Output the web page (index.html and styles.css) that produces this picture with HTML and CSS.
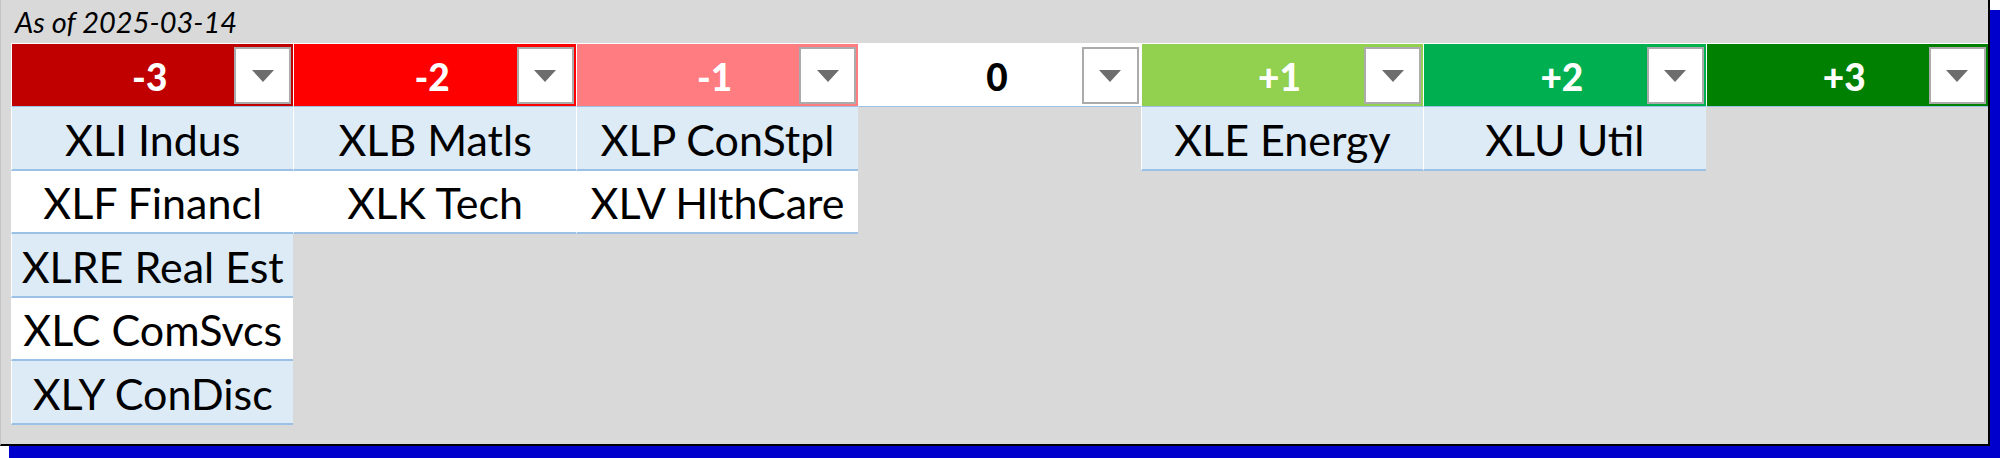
FILE: index.html
```html
<!DOCTYPE html>
<html lang="en">
<head>
<meta charset="utf-8">
<title>Sector ratings</title>
<link rel="stylesheet" href="styles.css">
</head>
<body>
<div class="panel">
  <div class="title">As of 2025-03-14</div>
  <div class="board">
    <div class="col">
      <div class="head h-m3"><span class="num">-3</span><span class="dd"><svg viewBox="0 0 22 12" width="22" height="12"><path d="M0 0H22L11 12Z"/></svg></span></div>
      <div class="cell alt">XLI Indus</div>
      <div class="cell">XLF Financl</div>
      <div class="cell alt">XLRE Real Est</div>
      <div class="cell">XLC ComSvcs</div>
      <div class="cell alt">XLY ConDisc</div>
    </div>
    <div class="col">
      <div class="head h-m2"><span class="num">-2</span><span class="dd"><svg viewBox="0 0 22 12" width="22" height="12"><path d="M0 0H22L11 12Z"/></svg></span></div>
      <div class="cell alt">XLB Matls</div>
      <div class="cell">XLK Tech</div>
    </div>
    <div class="col">
      <div class="head h-m1"><span class="num">-1</span><span class="dd"><svg viewBox="0 0 22 12" width="22" height="12"><path d="M0 0H22L11 12Z"/></svg></span></div>
      <div class="cell alt">XLP ConStpl</div>
      <div class="cell">XLV HlthCare</div>
    </div>
    <div class="col">
      <div class="head h-0"><span class="num">0</span><span class="dd"><svg viewBox="0 0 22 12" width="22" height="12"><path d="M0 0H22L11 12Z"/></svg></span></div>
    </div>
    <div class="col">
      <div class="head h-p1"><span class="num">+1</span><span class="dd"><svg viewBox="0 0 22 12" width="22" height="12"><path d="M0 0H22L11 12Z"/></svg></span></div>
      <div class="cell alt">XLE Energy</div>
    </div>
    <div class="col">
      <div class="head h-p2"><span class="num">+2</span><span class="dd"><svg viewBox="0 0 22 12" width="22" height="12"><path d="M0 0H22L11 12Z"/></svg></span></div>
      <div class="cell alt">XLU Util</div>
    </div>
    <div class="col">
      <div class="head h-p3"><span class="num">+3</span><span class="dd"><svg viewBox="0 0 22 12" width="22" height="12"><path d="M0 0H22L11 12Z"/></svg></span></div>
    </div>
  </div>
</div>
</body>
</html>
```
FILE: styles.css
```css
html, body {
  margin: 0;
  padding: 0;
  background: #ffffff;
}
body {
  width: 2000px;
  height: 458px;
  overflow: hidden;
  font-family: Lato, "Liberation Sans", sans-serif;
}
.panel {
  width: 1987px;
  height: 444px;
  background: #d9d9d9;
  border-left: 1px solid #c4c4c4;
  border-right: 2px solid #000000;
  border-bottom: 2px solid #000000;
  box-shadow: 10px 11px 0 1px #0000cc;
  display: flex;
  flex-direction: column;
}
.title {
  height: 43px;
  box-sizing: border-box;
  padding-left: 14px;
  font-style: italic;
  font-size: 29px;
  line-height: 44px;
  color: #000;
}
.board {
  margin-left: 10px;
  display: grid;
  grid-template-columns: repeat(7, 1fr);
  align-items: start;
}
.col {
  display: flex;
  flex-direction: column;
}
.head {
  position: relative;
  height: 62px;
  border-top: 1px solid #ffffff;
  border-left: 1px solid #ffffff;
  border-bottom: 1px solid #9bc2e6;
  display: flex;
  align-items: center;
  justify-content: center;
  font-weight: 900;
  font-size: 37px;
  color: #ffffff;
}
.num {
  position: relative;
  top: 1px;
  left: -3px;
}
.h-m3 { background: #c00000; }
.h-m2 { background: #ff0000; }
.h-m1 { background: #ff7c80; }
.h-0 { background: #ffffff; color: #000000; }
.h-p1 { background: #92d050; }
.h-p2 { background: #00b050; }
.h-p3 { background: #008000; }
.dd {
  position: absolute;
  right: 2px;
  top: 3px;
  width: 57px;
  height: 57px;
  box-sizing: border-box;
  border: 2px solid #ababab;
  background: #ffffff;
  display: flex;
  align-items: center;
  justify-content: center;
}
.dd svg path { fill: #6d6d6d; }
.cell {
  height: 63.5px;
  box-sizing: border-box;
  border-left: 1px solid #ffffff;
  border-bottom: 2px solid #9bc2e6;
  background: #ffffff;
  display: flex;
  align-items: center;
  justify-content: center;
  font-size: 43px;
  color: #000000;
  padding-top: 3px;
  white-space: nowrap;
}
.cell.alt { background: #ddebf7; }
```
